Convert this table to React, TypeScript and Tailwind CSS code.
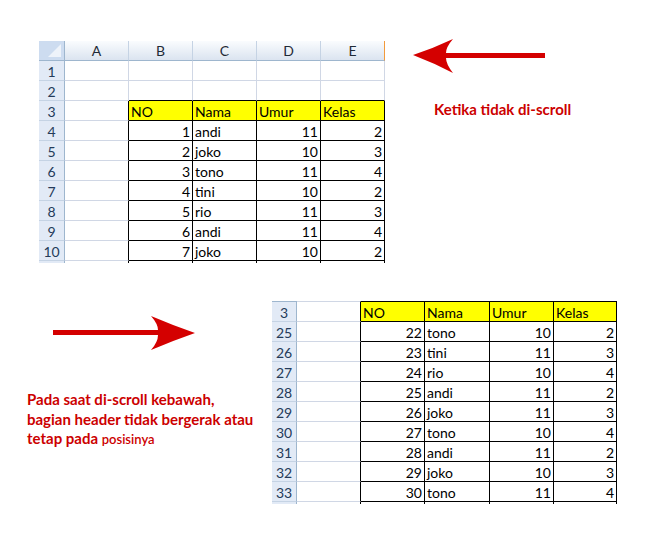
import React from 'react';

type Row = {
  label: string;
  head?: boolean;
  cells?: [string, string, string, string];
};

const topRows: Row[] = [
  { label: '1' },
  { label: '2' },
  { label: '3', head: true },
  { label: '4', cells: ['1', 'andi', '11', '2'] },
  { label: '5', cells: ['2', 'joko', '10', '3'] },
  { label: '6', cells: ['3', 'tono', '11', '4'] },
  { label: '7', cells: ['4', 'tini', '10', '2'] },
  { label: '8', cells: ['5', 'rio', '11', '3'] },
  { label: '9', cells: ['6', 'andi', '11', '4'] },
  { label: '10', cells: ['7', 'joko', '10', '2'] },
];

const bottomRows: Row[] = [
  { label: '3', head: true },
  { label: '25', cells: ['22', 'tono', '10', '2'] },
  { label: '26', cells: ['23', 'tini', '11', '3'] },
  { label: '27', cells: ['24', 'rio', '10', '4'] },
  { label: '28', cells: ['25', 'andi', '11', '2'] },
  { label: '29', cells: ['26', 'joko', '11', '3'] },
  { label: '30', cells: ['27', 'tono', '10', '4'] },
  { label: '31', cells: ['28', 'andi', '11', '2'] },
  { label: '32', cells: ['29', 'joko', '10', '3'] },
  { label: '33', cells: ['30', 'tono', '11', '4'] },
];

const headLabels = ['NO', 'Nama', 'Umur', 'Kelas'];
const cols = ['A', 'B', 'C', 'D', 'E'];

function Sheet({
  widths,
  rows,
  header = false,
  topLine = false,
}: {
  widths: string[];
  rows: Row[];
  header?: boolean;
  topLine?: boolean;
}) {
  const last = rows[rows.length - 1];
  const lastIn = !!(last.head || last.cells);

  return (
    <div className="flex flex-col text-[14px] leading-[17px] text-black">
      {/* Column letters */}
      {header && (
        <div className="flex h-[20px]">
          <div
            className={`${widths[0]} relative h-[20px] border-r border-b border-r-[#9eb6ce] border-b-[#9eb6ce] bg-[#cddcf0]`}
          >
            <svg className="absolute right-[3px] bottom-[3px]" width="13" height="13">
              <polygon points="13,0 13,13 0,13" fill="#eef3fa" />
            </svg>
          </div>
          {cols.map((c, i) => (
            <div
              key={c}
              className={`${widths[i + 1]} flex h-[20px] items-center justify-center border-r border-b border-b-[#9eb6ce] bg-gradient-to-b from-[#fafcfe] to-[#dbe4f0] leading-[20px] text-[#1f2a37] ${
                i === 4 ? 'border-r-[#f29a3c]' : 'border-r-[#c5d3e4]'
              }`}
            >
              {c}
            </div>
          ))}
        </div>
      )}

      {rows.map((row, r) => {
        const inTable = !!(row.head || row.cells);
        const next = rows[r + 1];
        const nextIn = !!(next && (next.head || next.cells));
        const first = topLine && r === 0;

        return (
          <div key={row.label} className="flex">
            <div
              className={`${widths[0]} flex items-start justify-center border-r border-b border-r-[#9eb6ce] border-b-[#c5d3e4] bg-[#e2eaf6] pt-[2px] text-[#243b5a] ${
                first ? 'h-[21px] border-t border-t-[#9eb6ce]' : 'h-[20px]'
              }`}
            >
              {row.label}
            </div>
            {cols.map((c, i) => {
              const black = i >= 1 && (inTable || nextIn);
              let content: React.ReactNode = null;
              let align = 'justify-start';
              if (i >= 1 && row.head) content = headLabels[i - 1];
              if (i >= 1 && row.cells) {
                content = row.cells[i - 1];
                if (i !== 2) align = 'justify-end';
              }
              return (
                <div
                  key={c}
                  className={`${widths[i + 1]} flex items-start ${align} border-r border-b px-[2px] pt-[2px] ${
                    inTable ? 'border-r-black' : 'border-r-[#d0d7e5]'
                  } ${black ? 'border-b-black' : 'border-b-[#d0d7e5]'} ${
                    i >= 1 && row.head ? 'bg-[#ffff00]' : 'bg-white'
                  } ${
                    first
                      ? `h-[21px] border-t ${i >= 1 ? 'border-t-black' : 'border-t-[#d0d7e5]'}`
                      : 'h-[20px]'
                  }`}
                >
                  {content}
                </div>
              );
            })}
          </div>
        );
      })}

      {/* cut-off strip */}
      <div className="flex h-[2px]">
        <div className={`${widths[0]} h-[2px] border-r border-r-[#9eb6ce] bg-[#e2eaf6]`} />
        {cols.map((c, i) => (
          <div
            key={c}
            className={`${widths[i + 1]} h-[2px] border-r ${
              lastIn ? 'border-r-black' : 'border-r-[#d0d7e5]'
            }`}
          />
        ))}
      </div>
    </div>
  );
}

function ArrowLeft() {
  return (
    <svg width="134" height="36" viewBox="0 0 134 36">
      <path
        d="M1 17 Q22 10 41 1 Q34 9 34 15 L133 15 L133 20 L34 20 Q34 26 41 35 Q22 25 1 17 Z"
        fill="#d40000"
      />
    </svg>
  );
}

function ArrowRight() {
  return (
    <svg width="144" height="36" viewBox="0 0 144 36">
      <path
        d="M143 18 Q120 10 99 1 Q106 9 106 15 L1 15 L1 20 L106 20 Q106 27 99 35 Q120 26 143 18 Z"
        fill="#d40000"
      />
    </svg>
  );
}

export default function App() {
  const topWidths = ['w-[26px]', 'w-[64px]', 'w-[64px]', 'w-[64px]', 'w-[64px]', 'w-[64px]'];
  const bottomWidths = ['w-[25px]', 'w-[64px]', 'w-[64px]', 'w-[65px]', 'w-[64px]', 'w-[63px]'];

  return (
    <div className="h-[546px] w-[645px] overflow-hidden bg-white font-['Lato',sans-serif]">
      {/* Before scrolling */}
      <div className="flex items-start pt-[38px] pl-[39px]">
        <div className="mt-[3px]">
          <Sheet widths={topWidths} rows={topRows} header />
        </div>
        <div className="ml-[27px] flex flex-col">
          <ArrowLeft />
          <p className="mt-[26px] ml-[22px] text-[15px] leading-[19px] font-bold text-[#cc0000]">
            Ketika tidak di-scroll
          </p>
        </div>
      </div>

      {/* After scrolling */}
      <div className="mt-[38px] flex items-start">
        <div className="flex w-[272px] flex-col">
          <div className="mt-[14px] ml-[52px]">
            <ArrowRight />
          </div>
          <p className="mt-[39px] ml-[27px] text-[15px] leading-[19.5px] font-bold text-[#cc0000]">
            Pada saat di-scroll kebawah,
            <br />
            bagian header tidak bergerak atau
            <br />
            tetap pada <span className="text-[13px] font-semibold">posisinya</span>
          </p>
        </div>
        <Sheet widths={bottomWidths} rows={bottomRows} topLine />
      </div>
    </div>
  );
}
